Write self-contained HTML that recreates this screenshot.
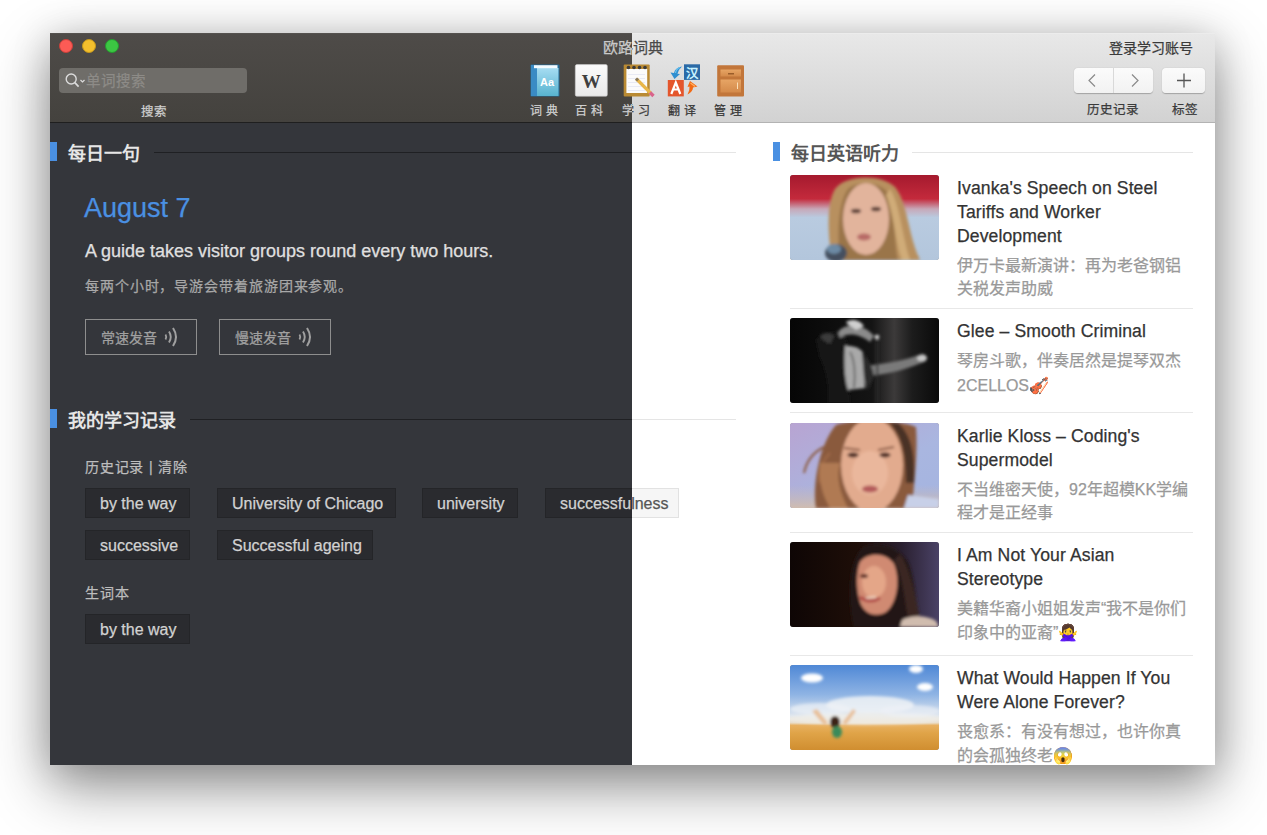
<!DOCTYPE html>
<html lang="zh-CN"><head><meta charset="utf-8"><style>*{box-sizing:border-box;margin:0;padding:0}
html,body{width:1267px;height:835px;overflow:hidden;background:#fff;font-family:"Liberation Sans",sans-serif}
.shadow{position:absolute;left:50px;top:33px;width:1165px;height:732px;box-shadow:0 22px 55px rgba(0,0,0,.42),0 4px 36px rgba(0,0,0,.17)}
.win{position:absolute;left:50px;top:34px;width:1165px;height:731px}
.topline{position:absolute;left:0;top:-1px;width:1165px;height:1px;background:#ececec}
.dark .topline{background:#55524f}
.dark{clip-path:inset(-1px 583px 0 0)}
.tb{position:absolute;left:0;top:0;width:1165px;height:89px;border-bottom:1px solid #b3b3b3;background:linear-gradient(#e8e8e8,#d2d2d2)}
.dark .tb{background:linear-gradient(#4e4b48,#44423e);border-bottom-color:#1f1f1f;box-shadow:0 1px 0 #26272a}
.content{position:absolute;left:0;top:89px;width:1165px;height:642px;background:#fff;overflow:hidden}
.dark .content{background:#34363b}
.abs{position:absolute;white-space:nowrap}
.title{left:0;width:1165px;top:2px;text-align:center;font-size:15px;color:#4a4a4a}
.dark .title{color:#c9c9c9}
.tl{position:absolute;top:5px;width:14px;height:14px;border-radius:50%}
.search{left:9px;top:34px;width:188px;height:25px;border-radius:4px;background:#fff;border:1px solid #c8c8c8}
.dark .search{background:#6f6d69;border:0}
.ph{font-size:14.5px;letter-spacing:1px;color:#b0b0b0}
.dark .ph{color:#8d8b87}
.lbl{font-size:12.5px;color:#3a3a3a}
.dark .lbl{color:#cfcfcf}
.tlbl{font-size:12px;letter-spacing:4px;color:#383838}
.dark .tlbl{color:#cfcfcf}
.hdr{font-size:18px;font-weight:bold;color:#555}
.dark .hdr{color:#e6e6e6}
.bar{position:absolute;width:7px;height:19px;background:#4a90e2}
.hline{position:absolute;height:1px;background:#e5e5e5}
.dark .hline{background:#1f2023}
.date{font-size:27px;color:#4a90e2}
.sent{font-size:18px;color:#333}
.dark .sent{color:#e0e0e0}
.trans{font-size:14px;letter-spacing:0.9px;color:#888}
.dark .trans{color:#a8a8a8}
.pbtn{position:absolute;height:36px;border:1px solid #ccc;font-size:14px;color:#777;padding:7px 0 0 15px;white-space:nowrap}
.dark .pbtn{border-color:#8e8e8e;color:#a0a0a0}
.sub{font-size:14px;letter-spacing:0.8px;color:#666}
.dark .sub{color:#bdbdbd}
.tag{position:absolute;height:30px;background:#f6f6f6;border:1px solid #e2e2e2;font-size:16px;color:#555;padding:6px 0 0 14px;white-space:nowrap}
.dark .tag{background:#2a2b2f;border-color:#242528;color:#d2d2d2}
.item-t{position:absolute;left:907px;font-size:17.6px;letter-spacing:0.1px;line-height:24px;color:#333;width:250px;white-space:nowrap}
.item-s{position:absolute;left:907px;font-size:16px;line-height:23px;color:#999;width:250px;white-space:nowrap}
.sep{position:absolute;left:740px;width:403px;height:1px;background:#e8e8e8}
.img{position:absolute;left:740px;width:149px;height:85px;border-radius:3px;overflow:hidden;background:#888}

.win .abs,.win .tag,.win .pbtn,.item-t,.item-s{-webkit-text-stroke:0.25px currentColor}
.win .hdr{-webkit-text-stroke:0}
</style></head><body>
<div class="shadow"></div>
<div class="win light"><div class="topline"></div><div class="tb">
<div class="abs title">欧路词典</div>
<div class="abs" style="right:22px;top:3px;font-size:14px;color:#3a3a3a">登录学习账号</div>
<div class="abs" style="left:1024px;top:34px;width:79px;height:25px;border-radius:4px;background:linear-gradient(#fbfbfb,#f2f2f2);box-shadow:0 0.5px 1px rgba(0,0,0,.25)"></div>
<div class="abs" style="left:1063px;top:34px;width:1px;height:25px;background:#d9d9d9"></div>
<div class="abs" style="left:1112px;top:34px;width:43px;height:25px;border-radius:4px;background:linear-gradient(#fbfbfb,#f2f2f2);box-shadow:0 0.5px 1px rgba(0,0,0,.25)"></div>
<svg class="abs" style="left:1024px;top:34px" width="131" height="25"><path d="M21 6.5 L15 12.5 L21 18.5" fill="none" stroke="#8a8a8a" stroke-width="1.2"/><path d="M58 6.5 L64 12.5 L58 18.5" fill="none" stroke="#8a8a8a" stroke-width="1.2"/><path d="M110 5.5 V19.5 M103 12.5 H117" stroke="#555" stroke-width="1.3"/></svg>
<div class="abs lbl" style="left:1037px;top:65px">历史记录</div>
<div class="abs lbl" style="left:1122px;top:65px">标签</div>
<div class="abs search"></div>
<svg class="abs" style="left:14px;top:38px" width="24" height="17"><circle cx="7.2" cy="7" r="5" fill="none" stroke="#777" stroke-width="1.4"/><path d="M10.8 10.6 L14.6 14.6" stroke="#777" stroke-width="1.7"/><path d="M16.5 8 L18.5 10 L20.5 8" fill="none" stroke="#777" stroke-width="1.2"/></svg>
<div class="abs ph" style="left:36px;top:35px">单词搜索</div>
<div class="abs lbl" style="left:91px;top:67px">搜索</div>
<div class="abs tlbl" style="left:480px;top:67px">词典</div>
<div class="abs tlbl" style="left:525px;top:67px">百科</div>
<div class="abs tlbl" style="left:571.5px;top:67px">学习</div>
<div class="abs tlbl" style="left:618px;top:67px">翻译</div>
<div class="abs tlbl" style="left:664px;top:67px">管理</div>
</div><div class="content"><div class="bar" style="left:0;top:19px"></div>
<div class="abs hdr" style="left:18px;top:16px">每日一句</div>
<div class="hline" style="left:104px;top:29px;width:582px"></div>
<div class="abs date" style="left:34px;top:70px">August 7</div>
<div class="abs sent" style="left:35px;top:118px">A guide takes visitor groups round every two hours.</div>
<div class="abs trans" style="left:35px;top:152px">每两个小时，导游会带着旅游团来参观。</div>
<div class="pbtn" style="left:35px;top:196px;width:112px">常速发音<svg width="16" height="22" style="position:absolute;left:78px;top:6px" viewBox="0 0 16 22"><path d="M1.5 8.5 Q3 11 1.5 13.5" fill="none" stroke="currentColor" stroke-width="1.8"/><path d="M5 5.5 Q8.5 11 5 16.5" fill="none" stroke="currentColor" stroke-width="1.9"/><path d="M9 2 Q15 11 9 20" fill="none" stroke="currentColor" stroke-width="2"/></svg></div>
<div class="pbtn" style="left:169px;top:196px;width:112px">慢速发音<svg width="16" height="22" style="position:absolute;left:78px;top:6px" viewBox="0 0 16 22"><path d="M1.5 8.5 Q3 11 1.5 13.5" fill="none" stroke="currentColor" stroke-width="1.8"/><path d="M5 5.5 Q8.5 11 5 16.5" fill="none" stroke="currentColor" stroke-width="1.9"/><path d="M9 2 Q15 11 9 20" fill="none" stroke="currentColor" stroke-width="2"/></svg></div>
<div class="bar" style="left:0;top:286px"></div>
<div class="abs hdr" style="left:18px;top:283px">我的学习记录</div>
<div class="hline" style="left:140px;top:296px;width:546px"></div>
<div class="abs sub" style="left:35px;top:333px">历史记录 | 清除</div>
<div class="tag" style="left:35px;top:365px;width:105px">by the way</div>
<div class="tag" style="left:167px;top:365px;width:179px">University of Chicago</div>
<div class="tag" style="left:372px;top:365px;width:96px">university</div>
<div class="tag" style="left:495px;top:365px;width:134px">successfulness</div>
<div class="tag" style="left:35px;top:407px;width:105px">successive</div>
<div class="tag" style="left:167px;top:407px;width:156px">Successful ageing</div>
<div class="tag" style="left:35px;top:491px;width:105px">by the way</div>
<div class="abs sub" style="left:35px;top:459px">生词本</div>
<div class="bar" style="left:723px;top:19px"></div>
<div class="abs hdr" style="left:741px;top:16px">每日英语听力</div>
<div class="hline" style="left:862px;top:29px;width:281px"></div>
<div class="img img1" style="top:52px"><svg width="149" height="85" viewBox="0 0 149 85"><defs><filter id="bl" x="-20%" y="-20%" width="140%" height="140%"><feGaussianBlur stdDeviation="1.5"/></filter></defs>
<defs><linearGradient id="i1bg" x1="0" y1="0" x2="0" y2="1"><stop offset="0" stop-color="#a51a2e"/><stop offset="0.28" stop-color="#c42a3c"/><stop offset="0.40" stop-color="#c7a8b8"/><stop offset="0.5" stop-color="#b9cbe0"/><stop offset="1" stop-color="#b3c6dc"/></linearGradient></defs>
<rect width="149" height="85" fill="url(#i1bg)"/>
<g filter="url(#bl)">
<path d="M42 85 C38 60 36 30 45 14 C55 0 90 -2 105 12 C118 28 118 60 130 85 Z" fill="#b8905e"/>
<path d="M50 85 C47 60 48 28 58 14 C66 6 90 6 98 18 C106 40 104 70 108 85Z" fill="#9a744a"/>
<ellipse cx="76" cy="44" rx="23" ry="36" fill="#e2b49c"/>
<ellipse cx="66" cy="36" rx="5" ry="2.3" fill="#5a3c34"/>
<ellipse cx="86" cy="34" rx="5" ry="2.3" fill="#5a3c34"/>
<ellipse cx="74" cy="62" rx="7" ry="3.5" fill="#b86a66"/>
<path d="M96 20 C104 40 106 70 112 85 L120 85 C112 60 110 30 100 14Z" fill="#d0ac78"/>
<ellipse cx="46" cy="78" rx="11" ry="9" fill="#44505e"/>
<ellipse cx="44" cy="74" rx="7" ry="5" fill="#6d8aa4"/>
</g></svg></div>
<div class="item-t" style="top:53px">Ivanka's Speech on Steel<br>Tariffs and Worker<br>Development</div>
<div class="item-s" style="top:131px">伊万卡最新演讲：再为老爸钢铝<br>关税发声助威</div>
<div class="img img2" style="top:195px"><svg width="149" height="85" viewBox="0 0 149 85"><defs><filter id="bl" x="-20%" y="-20%" width="140%" height="140%"><feGaussianBlur stdDeviation="0.9"/></filter></defs>
<defs><linearGradient id="i2bg" x1="0" y1="0" x2="1" y2="0"><stop offset="0" stop-color="#060606"/><stop offset="0.55" stop-color="#141414"/><stop offset="0.70" stop-color="#3c3a3a"/><stop offset="0.82" stop-color="#1c1c1c"/><stop offset="1" stop-color="#0a0a0a"/></linearGradient></defs>
<rect width="149" height="85" fill="url(#i2bg)"/>
<g filter="url(#bl)">
<path d="M26 22 C34 12 48 12 56 20 L60 50 C58 70 60 85 60 85 L38 85 C40 70 36 50 30 40Z" fill="#161616"/>
<path d="M30 18 C34 14 40 14 44 18 L40 26 C36 24 32 22 30 18Z" fill="#3a3a3a"/>
<path d="M55 28 C61 27 68 29 73 34 L75 70 L58 72 C54 60 54 40 55 28Z" fill="#a9a9a9"/><path d="M60 34 C64 40 66 55 64 70" stroke="#6a6a6a" stroke-width="2" fill="none"/>
<path d="M48 14 C56 4 74 6 84 18 L80 24 C70 16 58 14 50 20Z" fill="#8a8a8a"/>
<path d="M56 4 C62 0 70 2 74 8 L66 12 C62 8 58 8 56 4Z" fill="#d0d0d0"/>
<path d="M76 48 C90 46 110 44 126 38 L134 36 L136 43 C120 50 100 56 80 58Z" fill="#7a7a7a"/>
<ellipse cx="132" cy="40" rx="5" ry="3.4" fill="#c8c8c8"/>
<rect x="86.5" y="18" width="1.6" height="67" fill="#2e2e2e"/>
<circle cx="87" cy="19" r="2.3" fill="#d8d8d8"/>
<path d="M72 34 C78 40 82 48 84 58 L78 72 L74 60Z" fill="#2a2a2a"/>
</g></svg></div>
<div class="item-t" style="top:196px">Glee – Smooth Criminal</div>
<div class="item-s" style="top:226px">琴房斗歌，伴奏居然是提琴双杰<br><span style='position:relative;top:2px'>2CELLOS🎻</span></div>
<div class="img img3" style="top:300px"><svg width="149" height="85" viewBox="0 0 149 85"><defs><filter id="bl" x="-20%" y="-20%" width="140%" height="140%"><feGaussianBlur stdDeviation="1.5"/></filter></defs>
<defs><linearGradient id="i3bg" x1="0" y1="0" x2="1" y2="1"><stop offset="0" stop-color="#b8a4d2"/><stop offset="0.6" stop-color="#a9b6e0"/><stop offset="1" stop-color="#a4b4e0"/></linearGradient>
<linearGradient id="i3b2" x1="0" y1="0" x2="0" y2="1"><stop offset="0" stop-color="#c8b8b8" stop-opacity="0"/><stop offset="1" stop-color="#d0bcb0"/></linearGradient></defs>
<rect width="149" height="85" fill="url(#i3bg)"/>
<rect y="62" width="149" height="23" fill="url(#i3b2)"/>
<g filter="url(#bl)">
<path d="M26 85 C22 60 30 20 46 2 C60 -4 110 -4 126 4 C128 30 124 60 122 85Z" fill="#8a5a3c"/>
<path d="M108 0 C120 10 126 30 124 60 L116 60 C116 30 112 14 100 0Z" fill="#4a3026"/>
<ellipse cx="82" cy="42" rx="31" ry="47" fill="#e2ab8e"/>
<ellipse cx="80" cy="50" rx="18" ry="22" fill="#eab79c"/>
<path d="M34 24 C22 30 16 40 14 50" stroke="#8a5a3e" stroke-width="2" fill="none"/>
<path d="M40 30 C30 40 28 52 30 60" stroke="#a06a48" stroke-width="2" fill="none"/>
<ellipse cx="63" cy="32" rx="5.5" ry="2.6" fill="#4a2c24"/>
<ellipse cx="95" cy="32" rx="5.5" ry="2.6" fill="#4a2c24"/>
<path d="M54 25 L70 27 M88 27 L104 24" stroke="#8a5a44" stroke-width="2.2"/>
<ellipse cx="80" cy="66" rx="8" ry="3.6" fill="#b45a5a"/>
<path d="M118 72 L149 76 L149 85 L114 85Z" fill="#c8d0e8"/>
<path d="M30 40 C28 60 34 75 40 85 L58 85 C50 70 46 55 50 40Z" fill="#b07a52"/>
</g></svg></div>
<div class="item-t" style="top:301px">Karlie Kloss – Coding's<br>Supermodel</div>
<div class="item-s" style="top:355px">不当维密天使，92年超模KK学编<br>程才是正经事</div>
<div class="img img4" style="top:419px"><svg width="149" height="85" viewBox="0 0 149 85"><defs><filter id="bl" x="-20%" y="-20%" width="140%" height="140%"><feGaussianBlur stdDeviation="1.5"/></filter></defs>
<defs><linearGradient id="i4bg" x1="0" y1="0" x2="1" y2="0"><stop offset="0" stop-color="#0e0605"/><stop offset="0.45" stop-color="#1e0e08"/><stop offset="0.75" stop-color="#2a2030"/><stop offset="1" stop-color="#4a4266"/></linearGradient></defs>
<rect width="149" height="85" fill="url(#i4bg)"/>
<g filter="url(#bl)">
<path d="M64 85 C58 60 58 20 72 6 C86 -2 108 4 118 20 C126 40 126 70 132 85Z" fill="#241612"/>
<path d="M70 20 C78 10 96 10 104 22 C110 36 108 60 96 70 C86 76 74 72 70 60 C66 48 66 30 70 20Z" fill="#d08a72"/>
<ellipse cx="84" cy="40" rx="12" ry="16" fill="#e4a688"/>
<ellipse cx="74" cy="34" rx="4" ry="2" fill="#5a2a20"/>
<path d="M70 55 C76 60 84 60 90 56" stroke="#b04a46" stroke-width="3" fill="none"/>
<path d="M76 56 L86 55" stroke="#f0e0d0" stroke-width="1.4"/>
<path d="M104 18 C114 35 114 60 120 85 L132 85 C126 60 122 30 110 12Z" fill="#3a2824"/>
<path d="M112 78 C122 73 136 73 146 79 L149 85 L110 85Z" fill="#d0bcae"/>
</g></svg></div>
<div class="item-t" style="top:420px">I Am Not Your Asian<br>Stereotype</div>
<div class="item-s" style="top:474px">美籍华裔小姐姐发声“我不是你们<br><span style='position:relative;top:1px'>印象中的亚裔”🙅‍♀️</span></div>
<div class="img img5" style="top:542px"><svg width="149" height="85" viewBox="0 0 149 85"><defs><filter id="bl" x="-20%" y="-20%" width="140%" height="140%"><feGaussianBlur stdDeviation="0.8"/></filter></defs>
<defs><linearGradient id="i5bg" x1="0" y1="0" x2="0" y2="1"><stop offset="0" stop-color="#4f88d6"/><stop offset="0.35" stop-color="#8fb4e4"/><stop offset="0.6" stop-color="#dfe6ee"/><stop offset="0.68" stop-color="#e8dcc8"/><stop offset="0.71" stop-color="#e8b060"/><stop offset="0.8" stop-color="#e0a448"/><stop offset="1" stop-color="#d08e30"/></linearGradient></defs>
<rect width="149" height="85" fill="url(#i5bg)"/>
<g filter="url(#bl)">
<ellipse cx="22" cy="13" rx="11" ry="4.5" fill="#fff"/>
<ellipse cx="135" cy="22" rx="8" ry="4" fill="#fff"/>
<ellipse cx="126" cy="4" rx="7" ry="4" fill="#fff"/>
<ellipse cx="80" cy="40" rx="44" ry="9" fill="#eef2f6" opacity="0.85"/><ellipse cx="75" cy="54" rx="80" ry="6" fill="#f2efe8" opacity="0.7"/>
<ellipse cx="30" cy="44" rx="30" ry="6" fill="#eef2f6" opacity="0.7"/>
<ellipse cx="120" cy="46" rx="30" ry="6" fill="#eef2f6" opacity="0.6"/>
<path d="M22 46 L34 60 L38 58 L27 44Z" fill="#e8c09a"/>
<path d="M66 46 L56 60 L52 58 L63 44Z" fill="#e8c09a"/>
<ellipse cx="45" cy="57" rx="5" ry="6" fill="#3a2418"/>
<ellipse cx="47" cy="67" rx="5" ry="6" fill="#3a8a5a"/>
</g></svg></div>
<div class="item-t" style="top:543px">What Would Happen If You<br>Were Alone Forever?</div>
<div class="item-s" style="top:597px">丧愈系：有没有想过，也许你真<br><span style='position:relative;top:1px'>的会孤独终老😱</span></div>
<div class="sep" style="top:185px"></div>
<div class="sep" style="top:289px"></div>
<div class="sep" style="top:409px"></div>
<div class="sep" style="top:532px"></div></div><svg class="abs" style="left:0;top:0" width="1165" height="89"><g transform="translate(-50,-34)">
<defs>
<linearGradient id="bk" x1="0" y1="0" x2="0" y2="1"><stop offset="0" stop-color="#a6dcf2"/><stop offset="1" stop-color="#58b3cf"/></linearGradient>
<linearGradient id="wk" x1="0" y1="0" x2="0" y2="1"><stop offset="0" stop-color="#fbfbfb"/><stop offset="1" stop-color="#e9e9e9"/></linearGradient>
<linearGradient id="mg" x1="0" y1="0" x2="0" y2="1"><stop offset="0" stop-color="#e7a565"/><stop offset="1" stop-color="#d48a4a"/></linearGradient>
</defs>
<!-- book -->
<rect x="530.5" y="64.5" width="29" height="32" rx="1" fill="#246a96"/>
<rect x="531" y="65" width="6" height="31" fill="#3a8bc4"/>
<rect x="537" y="68" width="21.5" height="28" fill="url(#bk)"/>
<rect x="534" y="65.2" width="23.5" height="3" fill="#f4fbff"/>
<text x="540" y="85.8" font-family="Liberation Sans" font-weight="bold" font-size="11" fill="#fff">Aa</text>
<!-- wiki -->
<rect x="575.3" y="64.6" width="32" height="31.6" rx="1.5" fill="url(#wk)" stroke="#c9c9c9" stroke-width="0.6"/>
<text x="591.3" y="88" text-anchor="middle" font-family="Liberation Serif" font-weight="bold" font-size="19" fill="#3f3f3f">W</text>
<!-- notepad -->
<rect x="623.7" y="64.5" width="26" height="32" rx="1" fill="#b98a33"/>
<rect x="626.4" y="69" width="20.8" height="24" fill="#fbfbfb"/>
<path d="M628 74.5H645M628 78.5H645M628 82.5H645M628 86.5H645M628 90.5H645" stroke="#dfe3f0" stroke-width="0.7"/>
<circle cx="628.5" cy="67.5" r="1.8" fill="#3b3b3b"/><circle cx="634" cy="67.5" r="1.8" fill="#3b3b3b"/><circle cx="639.5" cy="67.5" r="1.8" fill="#3b3b3b"/><circle cx="645" cy="67.5" r="1.8" fill="#3b3b3b"/>
<path d="M636.5 79 L650.5 93" stroke="#e8b64a" stroke-width="3.2" stroke-linecap="butt"/>
<path d="M636 78.5 L638 80.5" stroke="#8a7a5a" stroke-width="3"/>
<path d="M650 92.5 L653.5 96" stroke="#d9648a" stroke-width="3.4"/>
<!-- translate -->
<rect x="684" y="64.3" width="16" height="15.6" fill="#2b6aa6"/>
<text x="692" y="77.5" text-anchor="middle" font-family="Liberation Sans" font-weight="bold" font-size="12.5" fill="#c8f2ff">汉</text>
<rect x="667.8" y="80" width="16" height="16.4" fill="#e4562c"/>
<path d="M671.3 94 L675.8 82.5 L680.3 94 M673 89.5 H678.6" fill="none" stroke="#fff" stroke-width="2.2"/>
<path d="M682 66.5 Q675 67.5 674 73 L670.5 72.5 L674.5 79 L680 74 L677.5 73.8 Q678 70 682 66.5Z" fill="#2f8fd0"/><path d="M680 67.5 Q676 69 675.5 73" stroke="#6cc4f0" stroke-width="1.2" fill="none"/>
<path d="M687.5 94.5 Q690 90 689.5 86.5 L687.5 87 L690 81 L697.5 86.5 L693 87.5 Q693 91.5 687.5 94.5Z" fill="#f26a14"/><path d="M690.5 83 L695 86.5" stroke="#ffb060" stroke-width="1.2"/>
<!-- manage -->
<rect x="717.2" y="65.3" width="26.8" height="31.1" rx="1" fill="#c2763a"/>
<rect x="720.5" y="69.5" width="20.5" height="7" fill="url(#mg)"/>
<rect x="720.5" y="79.5" width="20.5" height="13" fill="url(#mg)"/>
<path d="M728 73.8 H734" stroke="#8a4f20" stroke-width="1.2"/>
<path d="M737.5 82.5 V89" stroke="#fbe0b8" stroke-width="1"/>
</g></svg>
</div>
<div class="win dark"><div class="topline"></div><div class="tb">
<div class="abs title">欧路词典</div>
<div class="tl" style="left:9.3px;background:#fc5b55;border:1px solid #c8403a"></div>
<div class="tl" style="left:32.2px;background:#f3bf2d;border:1px solid #c4971c"></div>
<div class="tl" style="left:55.3px;background:#3cc743;border:1px solid #249a2e"></div>
<div class="abs search"></div>
<svg class="abs" style="left:14px;top:38px" width="24" height="17"><circle cx="7.2" cy="7" r="5" fill="none" stroke="#dcdcdc" stroke-width="1.4"/><path d="M10.8 10.6 L14.6 14.6" stroke="#dcdcdc" stroke-width="1.7"/><path d="M16.5 8 L18.5 10 L20.5 8" fill="none" stroke="#dcdcdc" stroke-width="1.2"/></svg>
<div class="abs ph" style="left:36px;top:35px">单词搜索</div>
<div class="abs lbl" style="left:91px;top:67px">搜索</div>
<div class="abs tlbl" style="left:480px;top:67px">词典</div>
<div class="abs tlbl" style="left:525px;top:67px">百科</div>
<div class="abs tlbl" style="left:571.5px;top:67px">学习</div>
<div class="abs tlbl" style="left:618px;top:67px">翻译</div>
<div class="abs tlbl" style="left:664px;top:67px">管理</div>
</div><div class="content"><div class="bar" style="left:0;top:19px"></div>
<div class="abs hdr" style="left:18px;top:16px">每日一句</div>
<div class="hline" style="left:104px;top:29px;width:582px"></div>
<div class="abs date" style="left:34px;top:70px">August 7</div>
<div class="abs sent" style="left:35px;top:118px">A guide takes visitor groups round every two hours.</div>
<div class="abs trans" style="left:35px;top:152px">每两个小时，导游会带着旅游团来参观。</div>
<div class="pbtn" style="left:35px;top:196px;width:112px">常速发音<svg width="16" height="22" style="position:absolute;left:78px;top:6px" viewBox="0 0 16 22"><path d="M1.5 8.5 Q3 11 1.5 13.5" fill="none" stroke="currentColor" stroke-width="1.8"/><path d="M5 5.5 Q8.5 11 5 16.5" fill="none" stroke="currentColor" stroke-width="1.9"/><path d="M9 2 Q15 11 9 20" fill="none" stroke="currentColor" stroke-width="2"/></svg></div>
<div class="pbtn" style="left:169px;top:196px;width:112px">慢速发音<svg width="16" height="22" style="position:absolute;left:78px;top:6px" viewBox="0 0 16 22"><path d="M1.5 8.5 Q3 11 1.5 13.5" fill="none" stroke="currentColor" stroke-width="1.8"/><path d="M5 5.5 Q8.5 11 5 16.5" fill="none" stroke="currentColor" stroke-width="1.9"/><path d="M9 2 Q15 11 9 20" fill="none" stroke="currentColor" stroke-width="2"/></svg></div>
<div class="bar" style="left:0;top:286px"></div>
<div class="abs hdr" style="left:18px;top:283px">我的学习记录</div>
<div class="hline" style="left:140px;top:296px;width:546px"></div>
<div class="abs sub" style="left:35px;top:333px">历史记录 | 清除</div>
<div class="tag" style="left:35px;top:365px;width:105px">by the way</div>
<div class="tag" style="left:167px;top:365px;width:179px">University of Chicago</div>
<div class="tag" style="left:372px;top:365px;width:96px">university</div>
<div class="tag" style="left:495px;top:365px;width:134px">successfulness</div>
<div class="tag" style="left:35px;top:407px;width:105px">successive</div>
<div class="tag" style="left:167px;top:407px;width:156px">Successful ageing</div>
<div class="tag" style="left:35px;top:491px;width:105px">by the way</div>
<div class="abs sub" style="left:35px;top:459px">生词本</div>
<div class="bar" style="left:723px;top:19px"></div>
<div class="abs hdr" style="left:741px;top:16px">每日英语听力</div>
<div class="hline" style="left:862px;top:29px;width:281px"></div>
<div class="img img1" style="top:52px"></div>
<div class="item-t" style="top:53px">Ivanka's Speech on Steel<br>Tariffs and Worker<br>Development</div>
<div class="item-s" style="top:131px">伊万卡最新演讲：再为老爸钢铝<br>关税发声助威</div>
<div class="img img2" style="top:195px"></div>
<div class="item-t" style="top:196px">Glee – Smooth Criminal</div>
<div class="item-s" style="top:226px">琴房斗歌，伴奏居然是提琴双杰<br><span style='position:relative;top:2px'>2CELLOS🎻</span></div>
<div class="img img3" style="top:300px"></div>
<div class="item-t" style="top:301px">Karlie Kloss – Coding's<br>Supermodel</div>
<div class="item-s" style="top:355px">不当维密天使，92年超模KK学编<br>程才是正经事</div>
<div class="img img4" style="top:419px"></div>
<div class="item-t" style="top:420px">I Am Not Your Asian<br>Stereotype</div>
<div class="item-s" style="top:474px">美籍华裔小姐姐发声“我不是你们<br><span style='position:relative;top:1px'>印象中的亚裔”🙅‍♀️</span></div>
<div class="img img5" style="top:542px"></div>
<div class="item-t" style="top:543px">What Would Happen If You<br>Were Alone Forever?</div>
<div class="item-s" style="top:597px">丧愈系：有没有想过，也许你真<br><span style='position:relative;top:1px'>的会孤独终老😱</span></div>
<div class="sep" style="top:185px"></div>
<div class="sep" style="top:289px"></div>
<div class="sep" style="top:409px"></div>
<div class="sep" style="top:532px"></div></div><svg class="abs" style="left:0;top:0" width="1165" height="89"><g transform="translate(-50,-34)">
<defs>
<linearGradient id="bk" x1="0" y1="0" x2="0" y2="1"><stop offset="0" stop-color="#a6dcf2"/><stop offset="1" stop-color="#58b3cf"/></linearGradient>
<linearGradient id="wk" x1="0" y1="0" x2="0" y2="1"><stop offset="0" stop-color="#fbfbfb"/><stop offset="1" stop-color="#e9e9e9"/></linearGradient>
<linearGradient id="mg" x1="0" y1="0" x2="0" y2="1"><stop offset="0" stop-color="#e7a565"/><stop offset="1" stop-color="#d48a4a"/></linearGradient>
</defs>
<!-- book -->
<rect x="530.5" y="64.5" width="29" height="32" rx="1" fill="#246a96"/>
<rect x="531" y="65" width="6" height="31" fill="#3a8bc4"/>
<rect x="537" y="68" width="21.5" height="28" fill="url(#bk)"/>
<rect x="534" y="65.2" width="23.5" height="3" fill="#f4fbff"/>
<text x="540" y="85.8" font-family="Liberation Sans" font-weight="bold" font-size="11" fill="#fff">Aa</text>
<!-- wiki -->
<rect x="575.3" y="64.6" width="32" height="31.6" rx="1.5" fill="url(#wk)" stroke="#c9c9c9" stroke-width="0.6"/>
<text x="591.3" y="88" text-anchor="middle" font-family="Liberation Serif" font-weight="bold" font-size="19" fill="#3f3f3f">W</text>
<!-- notepad -->
<rect x="623.7" y="64.5" width="26" height="32" rx="1" fill="#b98a33"/>
<rect x="626.4" y="69" width="20.8" height="24" fill="#fbfbfb"/>
<path d="M628 74.5H645M628 78.5H645M628 82.5H645M628 86.5H645M628 90.5H645" stroke="#dfe3f0" stroke-width="0.7"/>
<circle cx="628.5" cy="67.5" r="1.8" fill="#3b3b3b"/><circle cx="634" cy="67.5" r="1.8" fill="#3b3b3b"/><circle cx="639.5" cy="67.5" r="1.8" fill="#3b3b3b"/><circle cx="645" cy="67.5" r="1.8" fill="#3b3b3b"/>
<path d="M636.5 79 L650.5 93" stroke="#e8b64a" stroke-width="3.2" stroke-linecap="butt"/>
<path d="M636 78.5 L638 80.5" stroke="#8a7a5a" stroke-width="3"/>
<path d="M650 92.5 L653.5 96" stroke="#d9648a" stroke-width="3.4"/>
<!-- translate -->
<rect x="684" y="64.3" width="16" height="15.6" fill="#2b6aa6"/>
<text x="692" y="77.5" text-anchor="middle" font-family="Liberation Sans" font-weight="bold" font-size="12.5" fill="#c8f2ff">汉</text>
<rect x="667.8" y="80" width="16" height="16.4" fill="#e4562c"/>
<path d="M671.3 94 L675.8 82.5 L680.3 94 M673 89.5 H678.6" fill="none" stroke="#fff" stroke-width="2.2"/>
<path d="M682 66.5 Q675 67.5 674 73 L670.5 72.5 L674.5 79 L680 74 L677.5 73.8 Q678 70 682 66.5Z" fill="#2f8fd0"/><path d="M680 67.5 Q676 69 675.5 73" stroke="#6cc4f0" stroke-width="1.2" fill="none"/>
<path d="M687.5 94.5 Q690 90 689.5 86.5 L687.5 87 L690 81 L697.5 86.5 L693 87.5 Q693 91.5 687.5 94.5Z" fill="#f26a14"/><path d="M690.5 83 L695 86.5" stroke="#ffb060" stroke-width="1.2"/>
<!-- manage -->
<rect x="717.2" y="65.3" width="26.8" height="31.1" rx="1" fill="#c2763a"/>
<rect x="720.5" y="69.5" width="20.5" height="7" fill="url(#mg)"/>
<rect x="720.5" y="79.5" width="20.5" height="13" fill="url(#mg)"/>
<path d="M728 73.8 H734" stroke="#8a4f20" stroke-width="1.2"/>
<path d="M737.5 82.5 V89" stroke="#fbe0b8" stroke-width="1"/>
</g></svg>
</div>
</body></html>
